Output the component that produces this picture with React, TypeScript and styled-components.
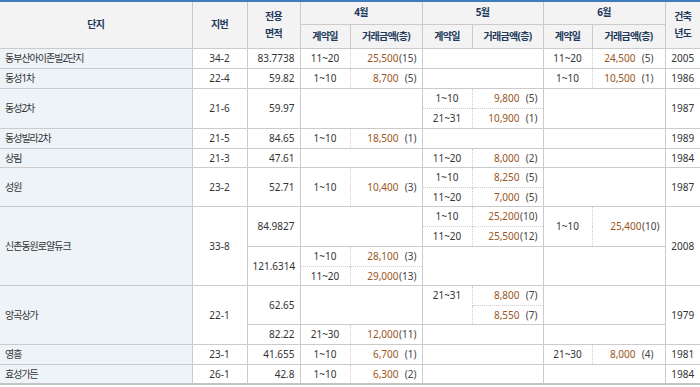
import React from "react";
import styled, { createGlobalStyle } from "styled-components";

type Line = "solid" | "dotted" | "none";

const LINE = "#cbcbcb";
const DOT = "#cfcfcf";

const edge = (l?: Line) =>
  l === "none" ? "none" : l === "dotted" ? `1px dotted ${DOT}` : `1px solid ${LINE}`;

const GlobalStyle = createGlobalStyle`
  html, body {
    margin: 0;
    padding: 0;
    background: #fff;
  }
  body {
    font-family: "Noto Sans", "Noto Sans CJK KR", sans-serif;
    font-size: 10px;
    color: #333;
  }
`;

const COLS = [192, 55, 53, 50, 72, 50, 71, 49, 73, 35];

export default function App() {
  return (
    <>
      <GlobalStyle />
      <Table>
        <colgroup>
          {COLS.map((w, i) => (
            <Col key={i} $w={w} />
          ))}
        </colgroup>
        <thead>
          <Row $h={23}>
            <Th rowSpan={2} $left="none">단지</Th>
            <Th rowSpan={2}>지번</Th>
            <Th rowSpan={2}>
              전용
              <br />
              면적
            </Th>
            <Th colSpan={2}>4월</Th>
            <Th colSpan={2}>5월</Th>
            <Th colSpan={2}>6월</Th>
            <Th rowSpan={2}>
              건축
              <br />
              년도
            </Th>
          </Row>
          <Row $h={24}>
            {["4", "5", "6"].map((m) => (
              <React.Fragment key={m}>
                <Th>계약일</Th>
                <Th>거래금액(층)</Th>
              </React.Fragment>
            ))}
          </Row>
        </thead>
        <tbody>
          <Row $h={20}>
            <Name>동부산아이존빌2단지</Name>
            <Lot>34-2</Lot>
            <Area>83.7738</Area>
            <Deal day="11~20" amount="25,500" floor={15} />
            <Blank colSpan={2} />
            <Deal day="11~20" amount="24,500" floor={5} inset />
            <Year>2005</Year>
          </Row>
          <Row $h={20}>
            <Name>동성1차</Name>
            <Lot>22-4</Lot>
            <Area>59.82</Area>
            <Deal day="1~10" amount="8,700" floor={5} />
            <Blank colSpan={2} />
            <Deal day="1~10" amount="10,500" floor={1} inset />
            <Year>1986</Year>
          </Row>

          <Row $h={20}>
            <Name rowSpan={2}>동성2차</Name>
            <Lot rowSpan={2}>21-6</Lot>
            <Area rowSpan={2}>59.97</Area>
            <Blank colSpan={2} rowSpan={2} />
            <Deal day="1~10" amount="9,800" floor={5} />
            <Blank colSpan={2} rowSpan={2} />
            <Year rowSpan={2}>1987</Year>
          </Row>
          <Row $h={20}>
            <Deal day="21~31" amount="10,900" floor={1} top="dotted" />
          </Row>

          <Row $h={20}>
            <Name>동성빌라2차</Name>
            <Lot>21-5</Lot>
            <Area>84.65</Area>
            <Deal day="1~10" amount="18,500" floor={1} />
            <Blank colSpan={2} />
            <Blank colSpan={2} />
            <Year>1989</Year>
          </Row>
          <Row $h={19}>
            <Name>상림</Name>
            <Lot>21-3</Lot>
            <Area>47.61</Area>
            <Blank colSpan={2} />
            <Deal day="11~20" amount="8,000" floor={2} />
            <Blank colSpan={2} />
            <Year>1984</Year>
          </Row>

          <Row $h={20}>
            <Name rowSpan={2}>성원</Name>
            <Lot rowSpan={2}>23-2</Lot>
            <Area rowSpan={2}>52.71</Area>
            <Deal day="1~10" amount="10,400" floor={3} rowSpan={2} />
            <Deal day="1~10" amount="8,250" floor={5} />
            <Blank colSpan={2} rowSpan={2} />
            <Year rowSpan={2}>1987</Year>
          </Row>
          <Row $h={19}>
            <Deal day="11~20" amount="7,000" floor={5} top="dotted" />
          </Row>

          <Row $h={20}>
            <Name rowSpan={4}>신촌동원로얄듀크</Name>
            <Lot rowSpan={4}>33-8</Lot>
            <Area rowSpan={2}>84.9827</Area>
            <Blank colSpan={2} rowSpan={2} />
            <Deal day="1~10" amount="25,200" floor={10} />
            <Deal day="1~10" amount="25,400" floor={10} rowSpan={2} />
            <Year rowSpan={4}>2008</Year>
          </Row>
          <Row $h={20}>
            <Deal day="11~20" amount="25,500" floor={12} top="dotted" />
          </Row>
          <Row $h={20}>
            <Area rowSpan={2}>121.6314</Area>
            <Deal day="1~10" amount="28,100" floor={3} />
            <Blank colSpan={2} rowSpan={2} />
            <Blank colSpan={2} rowSpan={2} />
          </Row>
          <Row $h={19}>
            <Deal day="11~20" amount="29,000" floor={13} top="dotted" />
          </Row>

          <Row $h={20}>
            <Name rowSpan={3}>앙곡상가</Name>
            <Lot rowSpan={3}>22-1</Lot>
            <Area rowSpan={2}>62.65</Area>
            <Blank colSpan={2} rowSpan={2} />
            <Day rowSpan={2} $valign="top">
              21~31
            </Day>
            <Price>
              <Amount>8,800</Amount>
              <Floor>(7)</Floor>
            </Price>
            <Blank colSpan={2} rowSpan={2} />
            <Year rowSpan={3}>1979</Year>
          </Row>
          <Row $h={19}>
            <Price $top="dotted">
              <Amount>8,550</Amount>
              <Floor>(7)</Floor>
            </Price>
          </Row>
          <Row $h={20}>
            <Area>82.22</Area>
            <Deal day="21~30" amount="12,000" floor={11} />
            <Blank colSpan={2} />
            <Blank colSpan={2} />
          </Row>

          <Row $h={20}>
            <Name>영흥</Name>
            <Lot>23-1</Lot>
            <Area>41.655</Area>
            <Deal day="1~10" amount="6,700" floor={1} />
            <Blank colSpan={2} />
            <Deal day="21~30" amount="8,000" floor={4} inset />
            <Year>1981</Year>
          </Row>
          <Row $h={20}>
            <Name>효성가든</Name>
            <Lot>26-1</Lot>
            <Area>42.8</Area>
            <Deal day="1~10" amount="6,300" floor={2} />
            <Blank colSpan={2} />
            <Blank colSpan={2} />
            <Year>1984</Year>
          </Row>
        </tbody>
      </Table>
    </>
  );
}

interface DealProps {
  day: string;
  amount: string;
  floor: number;
  top?: Line;
  rowSpan?: number;
  inset?: boolean;
}

const Deal = ({ day, amount, floor, top, rowSpan, inset }: DealProps) => (
  <>
    <Day $top={top} rowSpan={rowSpan}>
      {day}
    </Day>
    <Price $top={top} rowSpan={rowSpan} $inset={inset}>
      <Amount>{amount}</Amount>
      <Floor>({floor})</Floor>
    </Price>
  </>
);

const Table = styled.table`
  width: 700px;
  table-layout: fixed;
  border-collapse: collapse;
  border-top: 2px solid #3d7cbd;
  border-bottom: 2px solid #c4c4c4;
`;

const Col = styled.col<{ $w: number }>`
  width: ${(p) => p.$w}px;
`;

const Row = styled.tr<{ $h: number }>`
  height: ${(p) => p.$h}px;
`;

const Th = styled.th<{ $left?: Line }>`
  background: #f3f3f3;
  color: #21395a;
  font-family: "Noto Sans", "Noto Sans CJK KR", sans-serif;
  font-size: 10px;
  font-weight: 700;
  letter-spacing: -0.7px;
  line-height: 17px;
  text-align: center;
  padding: 0;
  border: 1px solid ${LINE};
  border-left: ${(p) => edge(p.$left ?? "solid")};
  border-right: none;
`;

interface CellProps {
  $top?: Line;
  $left?: Line;
  $valign?: "top" | "middle";
}

const Cell = styled.td<CellProps>`
  border: none;
  border-top: ${(p) => edge(p.$top ?? "solid")};
  border-left: ${(p) => edge(p.$left ?? "solid")};
  padding: 0 5px;
  white-space: nowrap;
  overflow: hidden;
  line-height: 18px;
  vertical-align: ${(p) => p.$valign ?? "middle"};
`;

const Name = styled(Cell).attrs({ $left: "none" as Line })`
  background: #eef3f8;
  text-align: left;
  letter-spacing: -1px;
`;

const Lot = styled(Cell)`
  text-align: center;
`;

const Area = styled(Cell)`
  text-align: right;
`;

const Day = styled(Cell)`
  text-align: center;
`;

const Price = styled(Cell).attrs({ $left: "dotted" as Line })<{ $inset?: boolean }>`
  text-align: right;
  padding-right: ${(p) => (p.$inset ? 11 : 5)}px;
`;

const Blank = styled(Cell)``;

const Year = styled(Cell)`
  text-align: center;
  padding: 0;
`;

const Amount = styled.span`
  color: #9a5523;
`;

const Floor = styled.span`
  display: inline-block;
  width: 18px;
  text-align: right;
  color: #444;
`;
